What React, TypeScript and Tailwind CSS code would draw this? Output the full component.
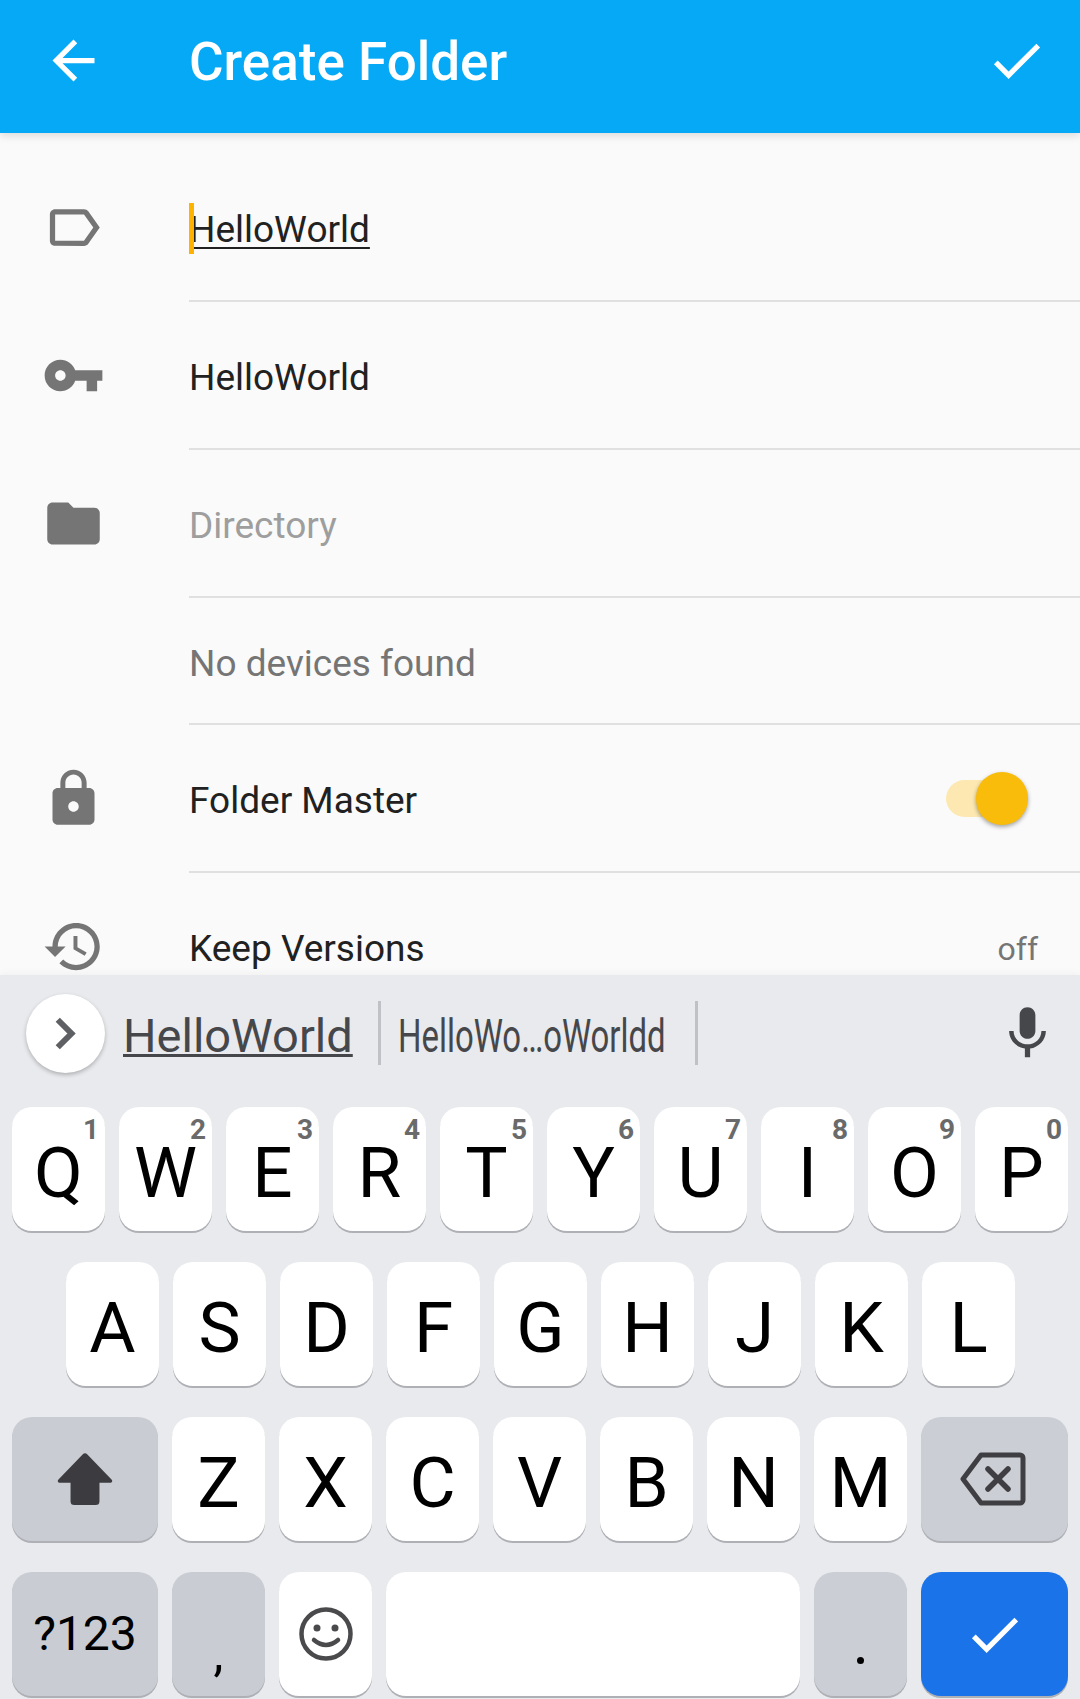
const Icon = ({ d, className }: { d: string; className: string }) => (
  <svg viewBox="0 0 24 24" className={className} fill="currentColor">
    <path d={d} />
  </svg>
);

const P = {
  back: "M20 11H7.83l5.59-5.59L12 4l-8 8 8 8 1.41-1.41L7.83 13H20v-2z",
  check: "M9 16.17L4.83 12l-1.42 1.41L9 19 21 7l-1.41-1.41z",
  label: "M17.63 5.84C17.27 5.33 16.67 5 16 5L5 5.01C3.9 5.01 3 5.9 3 7v10c0 1.1.9 1.99 2 1.99L16 19c.67 0 1.27-.33 1.63-.84L22 12l-4.37-6.16zM16 17H5V7h11l3.55 5L16 17z",
  key: "M12.65 10C11.83 7.67 9.61 6 7 6c-3.31 0-6 2.69-6 6s2.69 6 6 6c2.61 0 4.83-1.67 5.65-4H17v4h4v-4h2v-4H12.65zM7 14c-1.1 0-2-.9-2-2s.9-2 2-2 2 .9 2 2-.9 2-2 2z",
  folder: "M10 4H4c-1.1 0-1.99.9-1.99 2L2 18c0 1.1.9 2 2 2h16c1.1 0 2-.9 2-2V8c0-1.1-.9-2-2-2h-8l-2-2z",
  lock: "M18 8h-1V6c0-2.76-2.24-5-5-5S7 3.24 7 6v2H6c-1.1 0-2 .9-2 2v10c0 1.1.9 2 2 2h12c1.1 0 2-.9 2-2V10c0-1.1-.9-2-2-2zm-6 9c-1.1 0-2-.9-2-2s.9-2 2-2 2 .9 2 2-.9 2-2 2zm3.1-9H8.9V6c0-1.71 1.39-3.1 3.1-3.1 1.71 0 3.1 1.39 3.1 3.1v2z",
  history: "M13 3c-4.97 0-9 4.03-9 9H1l3.89 3.89.07.14L9 12H6c0-3.87 3.13-7 7-7s7 3.13 7 7-3.13 7-7 7c-1.93 0-3.68-.79-4.94-2.06l-1.42 1.42C8.27 19.99 10.51 21 13 21c4.97 0 9-4.03 9-9s-4.03-9-9-9zm-1 5v5l4.28 2.54.72-1.21-3.5-2.08V8H12z",
  mic: "M12 14c1.66 0 3-1.34 3-3V5c0-1.66-1.34-3-3-3S9 3.34 9 5v6c0 1.66 1.34 3 3 3zm5.3-3c0 3-2.54 5.1-5.3 5.1S6.7 14 6.7 11H5c0 3.42 2.72 6.23 6 6.72V21h2v-3.28c3.28-.49 6-3.3 6-6.72h-1.7z",
};

const Row = ({ icon, children, h = "h-[148px]" }: { icon?: string; children: React.ReactNode; h?: string }) => (
  <div className={`flex items-center shrink-0 ${h}`}>
    <div className="w-[189px] shrink-0 pl-[42px] pb-[2px]">
      {icon && <Icon d={icon} className="w-[63px] h-[63px] text-[#757575]" />}
    </div>
    <div className="flex-1 flex items-center self-stretch border-b-2 border-[#e0e0e0] pr-[42px] pt-[6px] text-[37px]">{children}</div>
  </div>
);

const base = "h-[124px] rounded-[20px] flex items-center justify-center shadow-[0_2px_0_#aeb0b5] text-black";

const Letter = ({ c, n }: { c: string; n?: string }) => (
  <div className={`${base} relative w-[93px] bg-white text-[71px] leading-none pt-[6px]`}>
    {c}
    {n && <span className="absolute right-[6px] top-[13px] text-[28px] font-bold leading-[20px] text-[#6a6a6a]">{n}</span>}
  </div>
);

const Keyboard = () => (
  <div className="h-[724px] shrink-0 bg-[#e8eaed] shadow-[0_-3px_6px_rgba(0,0,0,0.03)] relative z-10">
    <div className="h-[132px] flex items-center pl-[26px] pr-[33px]">
      <div className="w-[79px] h-[79px] mt-[-16px] rounded-full bg-white shadow-[0_2px_4px_rgba(0,0,0,0.25)] flex items-center justify-center shrink-0">
        <svg viewBox="0 0 24 36" className="w-[22px] h-[33px]" fill="none" stroke="#5f6063" strokeWidth="6.500"><path d="M3 3l15 15L3 33" /></svg>
      </div>
      <div className="flex items-center h-[64px] mt-[-16px]">
        <span className="ml-[18px] pt-[4px] text-[47px] text-[#46474b] underline decoration-[3px] underline-offset-[2px] leading-none w-[229px]">HelloWorld</span>
        <div className="ml-[26px] w-[3px] h-[64px] bg-[#bfc1c6]" />
        <div className="flex w-[314px] pl-[17px] pt-[4px]">
          <span className="block shrink-0 origin-left scale-x-[0.7] text-[47px] leading-none text-[#46474b] whitespace-nowrap">HelloWo…oWorldd</span>
        </div>
        <div className="w-[3px] h-[64px] bg-[#bfc1c6]" />
      </div>
      <div className="flex-1" />
      <Icon d={P.mic} className="w-[63px] h-[63px] mt-[-16px] text-[#46474b] mr-[-12px]" />
    </div>
    <div className="flex flex-col gap-[31px] px-[12px]">
      <div className="flex gap-[14px]">
        {["Q1","W2","E3","R4","T5","Y6","U7","I8","O9","P0"].map((k) => <Letter key={k} c={k[0]} n={k[1]} />)}
      </div>
      <div className="flex gap-[14px] pl-[54px]">
        {"ASDFGHJKL".split("").map((k) => <Letter key={k} c={k} />)}
      </div>
      <div className="flex gap-[14px]">
        <div className={`${base} w-[146px] bg-[#c9ccd3]`}>
          <svg viewBox="0 0 60 56" className="w-[58px] h-[54px]" fill="#3c3c40"><path d="M27.500 2.500a3.500 3.500 0 0 1 5 0l25 26c1.500 1.600.6 3.500-1.500 3.500H45v19a4 4 0 0 1-4 4H19a4 4 0 0 1-4-4V32H4c-2.100 0-3-1.900-1.500-3.500z" /></svg>
        </div>
        {"ZXCVBNM".split("").map((k) => <Letter key={k} c={k} />)}
        <div className={`${base} w-[147px] bg-[#cbced5] pr-[3px]`}>
          <svg viewBox="0 0 66 54" className="w-[66px] h-[54px]" fill="none" stroke="#3f3f43" strokeWidth="5" strokeLinejoin="round" strokeLinecap="round"><path d="M21 3h39a3 3 0 0 1 3 3v42a3 3 0 0 1-3 3H21L3 27z" /><path d="M28 17l20 20M48 17L28 37" strokeWidth="5.500" /></svg>
        </div>
      </div>
      <div className="flex gap-[14px]">
        <div className={`${base} w-[146px] bg-[#c9ccd3] text-[48px] text-[#3f3f43]`}>?123</div>
        <div className={`${base} w-[93px] bg-[#c9ccd3] items-end pb-[18px] text-[50px] leading-none`}>,</div>
        <div className={`${base} w-[93px] bg-white`}>
          <svg viewBox="0 0 54 54" className="w-[54px] h-[54px]" fill="none" stroke="#4a4a4d" strokeWidth="4.500"><circle cx="27" cy="27" r="24.500" /><circle cx="18" cy="21" r="3.500" fill="#4a4a4d" stroke="none" /><circle cx="36" cy="21" r="3.500" fill="#4a4a4d" stroke="none" /><path d="M15 33q12 10 24 0" strokeLinecap="round" /></svg>
        </div>
        <div className={`${base} w-[414px] bg-white`} />
        <div className={`${base} w-[93px] bg-[#cbced5]`}><span className="mt-[53px] w-[7px] h-[7px] rounded-full bg-black" /></div>
        <div className={`${base} w-[147px] bg-[#1a73e8]`}>
          <Icon d={P.check} className="w-[63px] h-[63px] text-white" />
        </div>
      </div>
    </div>
  </div>
);

export default function App() {
  return (
    <div className="h-[1699px] w-[1080px] flex flex-col overflow-hidden bg-[#fafafa] font-['Roboto',sans-serif]">
      <header className="h-[133px] shrink-0 bg-[#05a9f5] text-white flex items-center pl-[42px] pr-[32px] pb-[12px] shadow-[0_3px_8px_rgba(0,0,0,0.12)] relative z-10">
        <Icon d={P.back} className="w-[63px] h-[63px] shrink-0" />
        <h1 className="ml-[84px] mt-[4px] text-[53px] font-medium flex-1">Create Folder</h1>
        <Icon d={P.check} className="w-[63px] h-[63px] shrink-0" />
      </header>
      <main className="flex-1 min-h-0 overflow-hidden pt-[21px] flex flex-col">
        <Row icon={P.label}>
          <span className="relative text-[#212121] underline decoration-[2px] underline-offset-[5px]">
            <span className="absolute left-0 top-[1px] w-[5px] h-[51px] bg-[#ffb300]" />
            HelloWorld
          </span>
        </Row>
        <Row icon={P.key}><span className="text-[#212121]">HelloWorld</span></Row>
        <Row icon={P.folder}><span className="text-[#9e9e9e]">Directory</span></Row>
        <Row h="h-[127px]"><span className="text-[#757575]">No devices found</span></Row>
        <Row icon={P.lock}>
          <span className="text-[#212121] flex-1">Folder Master</span>
          <div className="relative w-[83px] h-[53px] flex items-center mr-[10px] mt-[-6px]">
            <div className="w-[78px] h-[37px] ml-[1px] rounded-full bg-[#fce8b0]" />
            <div className="absolute right-0 top-0 w-[52px] h-[53px] rounded-full bg-[#f9bc0a] shadow-[0_2px_4px_rgba(0,0,0,0.35)]" />
          </div>
        </Row>
        <Row icon={P.history}>
          <span className="text-[#212121] flex-1">Keep Versions</span>
          <span className="text-[#757575] text-[32px]">off</span>
        </Row>
      </main>
      <Keyboard />
    </div>
  );
}
